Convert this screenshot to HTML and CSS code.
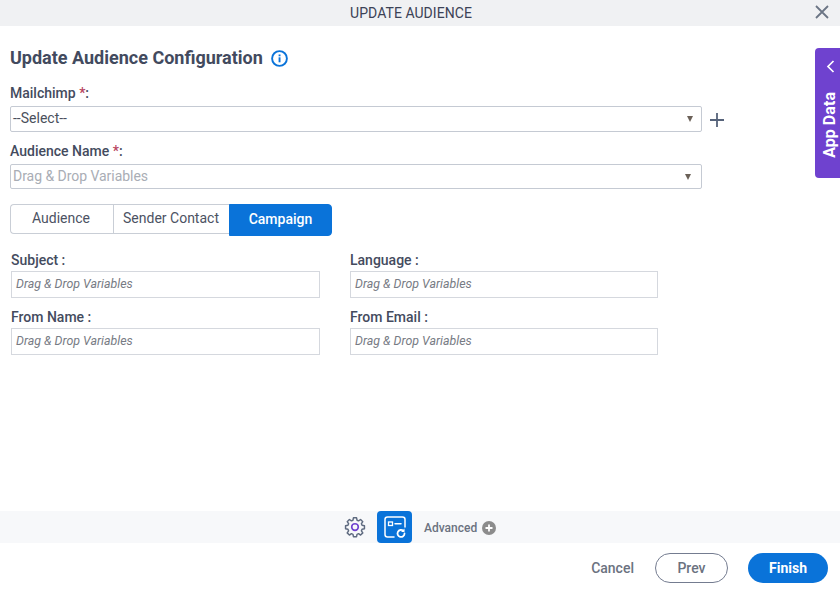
FILE: index.html
```html
<!DOCTYPE html>
<html lang="en">
<head>
<meta charset="utf-8">
<title>Update Audience</title>
<link rel="stylesheet" href="styles.css">
</head>
<body>
<div class="app">
  <header class="topbar">
    <span class="topbar-title">UPDATE AUDIENCE</span>
    <svg class="close" width="14" height="14" viewBox="0 0 14 14"><path d="M1 1l12 12M13 1L1 13" stroke="#6b7585" stroke-width="1.8" fill="none"/></svg>
  </header>
  <main class="content">
    <h1 class="heading">Update Audience Configuration
      <svg class="info" width="17" height="17" viewBox="0 0 17 17"><circle cx="8.5" cy="8.5" r="7.400" fill="none" stroke="#0a73d9" stroke-width="1.900"/><rect x="7.600" y="7.300" width="1.900" height="5" fill="#0a73d9"/><rect x="7.600" y="4.500" width="1.900" height="1.800" fill="#0a73d9"/></svg>
    </h1>
    <div class="label label-first">Mailchimp <span class="req">*</span>:</div>
    <div class="select-row">
      <div class="select"><span class="select-value">--Select--</span><span class="caret caret-a"></span></div>
      <svg class="plus" width="14" height="14" viewBox="0 0 14 14"><path d="M7 0v14M0 7h14" stroke="#56637a" stroke-width="1.8" fill="none"/></svg>
    </div>
    <div class="label label-second">Audience Name <span class="req">*</span>:</div>
    <div class="select select-b"><span class="select-ph">Drag &amp; Drop Variables</span><span class="caret"></span></div>
    <div class="tabs">
      <div class="tab tab-audience">Audience</div>
      <div class="tab tab-sender">Sender Contact</div>
      <div class="tab tab-active">Campaign</div>
    </div>
    <div class="form-grid">
      <div class="field"><div class="field-label">Subject :</div><div class="input">Drag &amp; Drop Variables</div></div>
      <div class="field"><div class="field-label">Language :</div><div class="input">Drag &amp; Drop Variables</div></div>
      <div class="field"><div class="field-label">From Name :</div><div class="input">Drag &amp; Drop Variables</div></div>
      <div class="field"><div class="field-label">From Email :</div><div class="input">Drag &amp; Drop Variables</div></div>
    </div>
  </main>
  <div class="toolbar">
    <svg class="gear" width="22" height="22" viewBox="0 0 24 24" fill="none"><path d="M10.3 2.5h3.4l.5 2.6 1.7.7 2.2-1.5 2.4 2.4-1.5 2.2.7 1.7 2.6.5v3.4l-2.6.5-.7 1.7 1.5 2.2-2.4 2.4-2.2-1.5-1.7.7-.5 2.6h-3.4l-.5-2.6-1.7-.7-2.2 1.5-2.4-2.4 1.5-2.2-.7-1.7-2.6-.5v-3.4l2.6-.5.7-1.7-1.5-2.2 2.4-2.4 2.2 1.5 1.7-.7z" stroke="#5f6b80" stroke-width="1.6" stroke-linejoin="round" transform="translate(0 -.5)"/><circle cx="12" cy="12" r="3.6" stroke="#6f42cf" stroke-width="1.8"/></svg>
    <div class="flow-btn">
      <svg width="24" height="24" viewBox="0 0 24 24" fill="none"><path d="M11 22H4.500A2.500 2.500 0 0 1 2 19.500V4.500A2.500 2.500 0 0 1 4.500 2h15A2.500 2.500 0 0 1 22 4.500V12" stroke="#fff" stroke-width="1.500" stroke-linecap="round"/><rect x="5.500" y="7" width="4" height="3.500" stroke="#fff" stroke-width="1.300"/><path d="M12 8.800h6" stroke="#fff" stroke-width="1.500" stroke-linecap="round"/><path d="M21.500 18.500a3.500 3.500 0 1 1-1.200-2.700" stroke="#fff" stroke-width="1.800" stroke-linecap="round"/><path d="M21.500 13.500v3.500H18z" fill="#fff"/></svg>
    </div>
    <span class="advanced">Advanced</span>
    <svg class="adv-plus" width="14" height="14" viewBox="0 0 14 14"><circle cx="7" cy="7" r="7" fill="#8c8c8c"/><path d="M7 3.500v7M3.500 7h7" stroke="#fff" stroke-width="1.800"/></svg>
  </div>
  <footer class="actions">
    <span class="cancel">Cancel</span>
    <span class="btn btn-prev">Prev</span>
    <span class="btn btn-finish">Finish</span>
  </footer>
  <aside class="app-data">
    <svg width="9" height="13" viewBox="0 0 9 13"><path d="M7.500 1L2 6.500l5.500 5.500" stroke="#fff" stroke-width="1.700" fill="none"/></svg>
    <span class="app-data-text">App Data</span>
  </aside>
</div>
</body>
</html>
```
FILE: styles.css
```css
* { box-sizing: border-box; }
html, body { margin: 0; padding: 0; }
body { font-family: Roboto, "Liberation Sans", sans-serif; background: #fff; }
.app { position: relative; width: 840px; height: 591px; display: flex; flex-direction: column; overflow: hidden; background: #fff; }
.topbar { height: 26px; flex: none; background: #f0f1f3; display: flex; align-items: center; justify-content: center; position: relative; }
.topbar-title { font-size: 14px; color: #3c4256; margin-right: 18px; letter-spacing: .05px; }
.close { position: absolute; right: 11px; top: 5px; }
.content { flex: 1; padding: 0 10px; min-height: 0; }
.heading { margin: 21px 0 0; height: 22px; line-height: 22px; font-size: 18px; font-weight: 700; color: #424a5e; display: flex; align-items: center; gap: 8px; white-space: nowrap; }
.info { margin-top: 1px; }
.label { font-size: 14px; font-weight: 500; color: #444b5e; line-height: 16px; }
.label-first { margin-top: 16px; }
.label-second { margin-top: 11px; }
.req { color: #b8455f; }
.select-row { display: flex; align-items: center; gap: 8px; margin-top: 5px; }
.select { width: 692px; height: 26px; border: 1px solid #c5cad3; border-radius: 2px; display: flex; align-items: center; justify-content: space-between; padding: 0 8px 0 2px; }
.select-b { height: 25px; margin-top: 5px; padding-right: 10px; }
.select-value { font-size: 14px; color: #4a4f5c; margin-bottom: 2px; }
.select-ph { font-size: 14px; color: #a9adb5; letter-spacing: -.04px; margin-bottom: 2px; }
.caret { width: 0; height: 0; border-left: 3.5px solid transparent; border-right: 3.5px solid transparent; border-top: 6px solid #6b6158; }
.caret-a { margin-right: 0; }
.plus { margin-top: 1px; }
.tabs { display: flex; margin-top: 15px; height: 32px; align-items: flex-start; }
.tab { height: 30px; font-size: 14px; color: #4c5263; display: flex; align-items: center; justify-content: center; border: 1px solid #c9ced6; background: #fff; padding-bottom: 2px; }
.tab-audience { width: 103px; border-radius: 4px 0 0 4px; border-right: 0; padding-right: 2px; }
.tab-sender { width: 117px; padding-right: 1px; }
.tab-active { width: 103px; height: 32px; margin-left: -1px; background: #0a73d9; border-color: #0a73d9; color: #fff; font-weight: 500; border-radius: 0 4px 4px 0; }
.form-grid { display: grid; grid-template-columns: 309px 308px; column-gap: 30px; row-gap: 11px; margin-top: 16px; padding-left: 1px; }
.field-label { font-size: 14px; font-weight: 500; color: #444b5e; line-height: 16px; }
.input { height: 27px; margin-top: 3px; border: 1px solid #d5d8de; display: flex; align-items: center; padding: 0 0 2px 4px; font-size: 12.4px; font-style: italic; color: #777b84; }
.toolbar { flex: none; height: 32px; background: #f7f8fa; display: flex; align-items: center; padding-left: 344px; }
.gear { flex: none; }
.flow-btn { width: 35px; height: 32px; margin-left: 11px; background: #0a73d9; border-radius: 4px; display: flex; align-items: center; justify-content: center; }
.advanced { font-size: 12px; font-weight: 500; color: #6b7280; margin: 1px 5px 0 12px; }
.adv-plus { margin-top: 2px; }
.actions { flex: none; height: 48px; display: flex; align-items: center; padding: 2px 12px 0 0; justify-content: flex-end; }
.cancel { font-size: 14px; font-weight: 500; color: #6b7280; margin-right: 21px; }
.btn { height: 30px; border-radius: 15px; display: flex; align-items: center; justify-content: center; font-size: 14px; font-weight: 500; }
.btn-prev { width: 73px; border: 1px solid #747c90; color: #6b7280; margin-right: 20px; }
.btn-finish { width: 80px; background: #0a73d9; color: #fff; font-weight: 700; }
.app-data { position: absolute; right: 0; top: 48px; width: 25px; height: 130px; background: #6f42cf; border-radius: 4px 0 0 4px; display: flex; flex-direction: column; align-items: center; padding: 12px 0 0 5px; color: #fff; }
.app-data-text { writing-mode: vertical-rl; transform: rotate(180deg); font-size: 16px; line-height: 20px; font-weight: 700; margin-top: 19px; white-space: nowrap; letter-spacing: .05px; }
```
